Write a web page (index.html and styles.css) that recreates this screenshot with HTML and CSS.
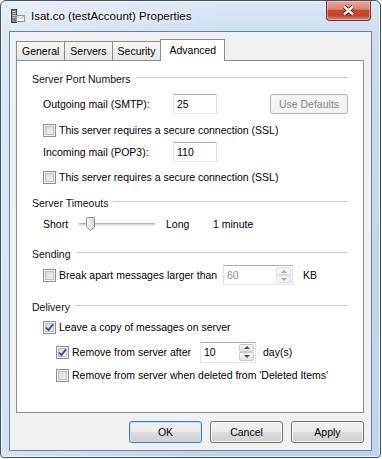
FILE: index.html
```html
<!DOCTYPE html>
<html lang="en">
<head>
<meta charset="UTF-8">
<title>Isat.co (testAccount) Properties</title>
<link rel="stylesheet" href="styles.css">
</head>
<body>

<div class="window">

  <!-- TITLE BAR -->
  <div class="titlebar">
    <svg class="app-icon" width="16" height="16" viewBox="0 0 16 16">
      <rect x="1.5" y="1.5" width="5" height="13" fill="#7a7e83" stroke="#3f4347"/>
      <path d="M2.5 3.5h3M2.5 5.5h3M2.5 7.5h3M2.5 9.5h3" stroke="#c8cbcf"/>
      <rect x="6.5" y="7.5" width="8" height="6" fill="#fdfdfd" stroke="#8d949b"/>
      <path d="M6.5 7.5l4 3 4-3" fill="none" stroke="#a5abb1"/>
    </svg>
    <span class="title">Isat.co (testAccount) Properties</span>
    <div class="close-btn">
      <svg width="13" height="11" viewBox="0 0 13 11">
        <path d="M2 1.5L11 9.5M11 1.5L2 9.5" stroke="#4b1c12" stroke-width="4.2"/>
        <path d="M2 1.5L11 9.5M11 1.5L2 9.5" stroke="#fff" stroke-width="2.4"/>
      </svg>
    </div>
  </div>

  <!-- CLIENT AREA -->
  <div class="client">

    <div class="tabs">
      <div class="tab">General</div>
      <div class="tab">Servers</div>
      <div class="tab">Security</div>
      <div class="tab active">Advanced</div>
    </div>

    <div class="panel">

      <!-- SERVER PORT NUMBERS -->
      <div class="group-title">Server Port Numbers</div>
      <div class="field mt6">
        <span class="field-label">Outgoing mail (SMTP):</span>
        <div class="textbox">25</div>
        <button class="btn small" disabled>Use Defaults</button>
      </div>
      <label class="chk mt6"><span class="box"></span>This server requires a secure connection (SSL)</label>
      <div class="field mt2">
        <span class="field-label">Incoming mail (POP3):</span>
        <div class="textbox">110</div>
      </div>
      <label class="chk mt5"><span class="box"></span>This server requires a secure connection (SSL)</label>

      <!-- SERVER TIMEOUTS -->
      <div class="group-title mt9">Server Timeouts</div>
      <div class="field mt2">
        <span class="sl-label">Short</span>
        <div class="track">
          <svg class="thumb" width="9" height="14" viewBox="0 0 9 14">
            <defs>
              <linearGradient id="tg" x1="0" y1="0" x2="1" y2="0">
                <stop offset="0" stop-color="#f7f7f7"/>
                <stop offset="1" stop-color="#d4d4d4"/>
              </linearGradient>
            </defs>
            <path d="M1.5 0.5h6a1 1 0 0 1 1 1v8.5l-4 3.5l-4-3.5v-8.5a1 1 0 0 1 1-1z" fill="url(#tg)" stroke="#8b8f94"/>
          </svg>
        </div>
        <span class="sl-long">Long</span>
        <span>1 minute</span>
      </div>

      <!-- SENDING -->
      <div class="group-title mt11">Sending</div>
      <div class="field mt2">
        <label class="chk flat break-label"><span class="box"></span>Break apart messages larger than</label>
        <div class="spin disabled">
          <span class="spin-val">60</span>
          <span class="spin-btns"><span class="up"></span><span class="down"></span></span>
        </div>
        <span class="unit">KB</span>
      </div>

      <!-- DELIVERY -->
      <div class="group-title mt13">Delivery</div>
      <label class="chk mt3">
        <span class="box"><svg width="11" height="11" viewBox="0 0 11 11"><path d="M2 5.5l2.5 2.6L9 2.2" fill="none" stroke="#2f4f8a" stroke-width="1.8"/></svg></span>Leave a copy of messages on server
      </label>
      <div class="field sub mt5">
        <label class="chk flat after-label">
          <span class="box"><svg width="11" height="11" viewBox="0 0 11 11"><path d="M2 5.5l2.5 2.6L9 2.2" fill="none" stroke="#2f4f8a" stroke-width="1.8"/></svg></span>Remove from server after
        </label>
        <div class="spin days">
          <span class="spin-val">10</span>
          <span class="spin-btns"><span class="up"></span><span class="down"></span></span>
        </div>
        <span class="unit days-unit">day(s)</span>
      </div>
      <label class="chk sub mt3"><span class="box"></span>Remove from server when deleted from 'Deleted Items'</label>

    </div>

    <!-- BUTTONS -->
    <div class="buttons">
      <button class="btn default">OK</button>
      <button class="btn">Cancel</button>
      <button class="btn">Apply</button>
    </div>

  </div>
</div>

</body>
</html>
```

FILE: styles.css
```css
body {
  margin: 0;
  background: #fff;
  font-family: "Liberation Sans", Arial, sans-serif;
  font-size: 10.5px;
  color: #000;
}

/* window frame */
.window {
  width: 381px;
  height: 458px;
  box-sizing: border-box;
  border: 1px solid #46525f;
  border-radius: 6px 6px 4px 4px;
  padding: 0 8px 6px;
  display: flex;
  flex-direction: column;
  background:
    linear-gradient(to right, rgba(255,255,255,.35), rgba(255,255,255,0) 60%),
    linear-gradient(#dbe8f6, #c9dcf1 40px, #bcd4ed);
  box-shadow: inset 0 0 0 1px rgba(255,255,255,.6);
}

.titlebar { height: 30px; display: flex; align-items: center; flex: none; }
.app-icon { margin: 0 5px 0 1px; flex: none; }
.title {
  flex: 1;
  font-size: 11.5px;
  text-shadow: 0 0 6px #fff, 0 0 3px #fff;
}
.close-btn {
  align-self: flex-start;
  width: 45px;
  height: 20px;
  margin-right: 1px;
  box-sizing: border-box;
  border: 1px solid #6b3a32;
  border-top: none;
  border-radius: 0 0 4px 4px;
  background: linear-gradient(#e9a899 0%, #dc8671 42%, #c8452c 50%, #c3442b 75%, #dd8770 100%);
  box-shadow: inset 0 0 0 1px rgba(255,220,210,.45);
  display: flex;
  align-items: center;
  justify-content: center;
}

.client {
  flex: 1;
  border: 1px solid #6d8094;
  background: #f0f0f0;
  padding: 7px 7px 7px 6px;
  display: flex;
  flex-direction: column;
}

/* tabs */
.tabs { display: flex; align-items: flex-end; height: 21px; }
.tab {
  height: 19px;
  box-sizing: border-box;
  border: 1px solid #898c95;
  border-bottom: none;
  padding: 0 5px;
  line-height: 18px;
  margin-right: -1px;
  background: linear-gradient(#f6f6f6, #e6e6e6);
}
.tab.active {
  height: 22px;
  margin: 0 0 -1px 0;
  padding: 0 8px;
  line-height: 20px;
  background: #fff;
  position: relative;
  z-index: 1;
}

.panel {
  height: 353px;
  box-sizing: border-box;
  border: 1px solid #898c95;
  background: #fff;
  padding: 10px 15px 0;
}

.group-title { display: flex; align-items: center; height: 16px; color: #111; }
.group-title::after {
  content: "";
  flex: 1;
  border-top: 1px solid #c9cbcd;
  margin: 0 0 3px 5px;
}

.mt2 { margin-top: 2px; }
.mt3 { margin-top: 3px; }
.mt5 { margin-top: 5px; }
.mt6 { margin-top: 6px; }
.mt9 { margin-top: 9px; }
.mt11 { margin-top: 11px; }
.mt13 { margin-top: 13px; }

.field { display: flex; align-items: center; height: 22px; margin-left: 11px; }
.field.sub { margin-left: 24px; }
.field-label { width: 130px; }

.textbox {
  width: 44px;
  height: 20px;
  box-sizing: border-box;
  border: 1px solid;
  border-color: #abadb3 #dbdfe6 #e3e9ef #e2e3ea;
  background: #fff;
  padding-left: 3px;
  line-height: 18px;
}

/* checkboxes */
.chk { display: flex; align-items: center; height: 18px; margin-left: 11px; }
.chk.sub { margin-left: 24px; }
.chk.flat { margin-left: 0; height: auto; }
.box {
  width: 13px;
  height: 13px;
  box-sizing: border-box;
  flex: none;
  margin-right: 3px;
  border: 1px solid #8e8f8f;
  background: linear-gradient(135deg, #cfd2d6, #f8f8f8);
  box-shadow: inset 0 0 0 1px #f4f4f4, inset 0 0 0 2px #bcc0c5;
}
.box svg { display: block; }
.break-label { width: 180px; }
.after-label { width: 144px; }

/* slider */
.sl-label { width: 36px; }
.track {
  position: relative;
  width: 76px;
  height: 1px;
  border-top: 1px solid #b4b4b4;
  border-bottom: 1px solid #e9e9e9;
  background: #d8d8d8;
}
.thumb { position: absolute; left: 7px; top: -7px; }
.sl-long { margin-left: 11px; width: 47px; }

/* spinners */
.spin {
  display: flex;
  width: 70px;
  height: 20px;
  box-sizing: border-box;
  border: 1px solid;
  border-color: #abadb3 #dbdfe6 #e3e9ef #e2e3ea;
  background: #fff;
}
.spin.days { width: 56px; height: 21px; }
.spin-val { flex: 1; padding-left: 3px; line-height: 18px; }
.spin.disabled .spin-val { color: #8d8d8d; }
.spin-btns { width: 16px; display: flex; flex-direction: column; padding: 1px 1px 1px 0; box-sizing: border-box; }
.spin-btns span {
  flex: 1;
  border: 1px solid #c3c8ce;
  border-radius: 2px;
  background: linear-gradient(#f7f7f7, #e1e3e6);
  display: flex;
  align-items: center;
  justify-content: center;
}
.spin-btns span::before {
  content: "";
  border-left: 3px solid transparent;
  border-right: 3px solid transparent;
}
.spin-btns .up::before { border-bottom: 3px solid #4d4d4d; }
.spin-btns .down::before { border-top: 3px solid #4d4d4d; }
.spin.disabled .spin-btns span { border-color: #dadde1; background: #f4f4f4; }
.spin.disabled .up::before { border-bottom-color: #a9a9a9; }
.spin.disabled .down::before { border-top-color: #a9a9a9; }
.unit { margin-left: 10px; }
.days-unit { margin-left: 7px; }

/* buttons */
.btn {
  width: 73px;
  height: 22px;
  box-sizing: border-box;
  border: 1px solid #707070;
  border-radius: 3px;
  padding: 0;
  font: inherit;
  color: #000;
  background: linear-gradient(#f2f2f2 0%, #ebebeb 50%, #dddddd 51%, #cfcfcf 100%);
  box-shadow: inset 0 0 0 1px rgba(255,255,255,.75);
}
.btn.default { border-color: #3c7fb1; box-shadow: inset 0 0 0 1px #b6e3f8; }
.btn.small {
  width: 78px;
  height: 20px;
  margin-left: auto;
  border-color: #adb2b5;
  background: #f4f4f4;
  color: #838383;
  box-shadow: none;
}
.buttons { display: flex; justify-content: flex-end; gap: 8px; margin-top: 8px; }
```
